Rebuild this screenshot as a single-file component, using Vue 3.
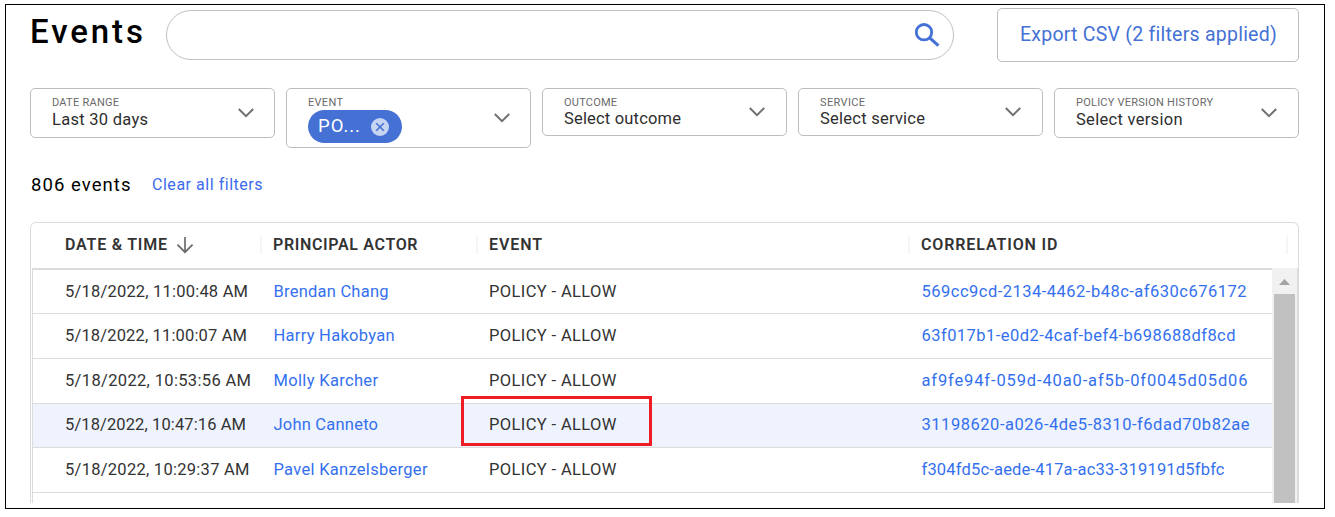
<script setup>
const filters = [
  { label: 'DATE RANGE', lw: 67, value: 'Last 30 days', vw: 96, size: 'mid' },
  { label: 'EVENT', lw: 35, chip: 'PO...', size: 'tall' },
  { label: 'OUTCOME', lw: 53, value: 'Select outcome', vw: 117, size: 'short' },
  { label: 'SERVICE', lw: 45, value: 'Select service', vw: 105, size: 'short' },
  { label: 'POLICY VERSION HISTORY', lw: 137, value: 'Select version', vw: 106.5, size: 'mid' },
]

const columns = [
  { name: 'DATE & TIME', w: 102, sorted: true },
  { name: 'PRINCIPAL ACTOR', w: 144.5 },
  { name: 'EVENT', w: 53 },
  { name: 'CORRELATION ID', w: 136.5 },
]

const rows = [
  { time: '5/18/2022, 11:00:48 AM', tw: 183, actor: 'Brendan Chang', aw: 115, id: '569cc9cd-2134-4462-b48c-af630c676172', iw: 325 },
  { time: '5/18/2022, 11:00:07 AM', tw: 182, actor: 'Harry Hakobyan', aw: 121, id: '63f017b1-e0d2-4caf-bef4-b698688df8cd', iw: 314 },
  { time: '5/18/2022, 10:53:56 AM', tw: 186, actor: 'Molly Karcher', aw: 104.5, id: 'af9fe94f-059d-40a0-af5b-0f0045d05d06', iw: 326 },
  { time: '5/18/2022, 10:47:16 AM', tw: 181, actor: 'John Canneto', aw: 104.5, id: '31198620-a026-4de5-8310-f6dad70b82ae', iw: 328, active: true },
  { time: '5/18/2022, 10:29:37 AM', tw: 184.5, actor: 'Pavel Kanzelsberger', aw: 154, id: 'f304fd5c-aede-417a-ac33-319191d5fbfc', iw: 303 },
]

// Tracks a line of text so that it spans the given width.
const vFit = {
  mounted(el, { value }) {
    el.style.letterSpacing = '0px'
    const natural = el.getBoundingClientRect().width
    const gaps = el.textContent.length - 1
    el.style.letterSpacing = `${((value - natural) / gaps).toFixed(3)}px`
  },
}
</script>

<template>
  <div class="page">
    <div class="frame">
      <header class="top">
        <h1><span v-fit="113">Events</span></h1>
        <div class="search">
          <svg width="26" height="26" viewBox="0 0 26 26" fill="none">
            <circle cx="10" cy="9.2" r="7.7" stroke="#4571d5" stroke-width="2.8" />
            <path d="M15.4 14.6 24.4 22.6" stroke="#4571d5" stroke-width="3.2" />
          </svg>
        </div>
        <button class="export"><span v-fit="256">Export CSV (2 filters applied)</span></button>
      </header>

      <section class="filters">
        <div v-for="f in filters" :key="f.label" class="filter" :class="f.size">
          <div class="field">
            <div class="label"><span v-fit="f.lw">{{ f.label }}</span></div>
            <div v-if="f.chip" class="chip">
              <span v-fit="42">{{ f.chip }}</span>
              <svg width="18" height="18" viewBox="0 0 18 18">
                <circle cx="9" cy="9" r="9" fill="#c7d4f2" />
                <path d="M5.2 5.2 12.8 12.8M12.8 5.2 5.2 12.8" stroke="#4571d5" stroke-width="1.6" />
              </svg>
            </div>
            <div v-else class="value"><span v-fit="f.vw">{{ f.value }}</span></div>
          </div>
          <svg class="chevron" width="16" height="10" viewBox="0 0 16 10" fill="none">
            <path d="M.8 1 8 8.2 15.2 1" stroke="#707070" stroke-width="2" />
          </svg>
        </div>
      </section>

      <div class="summary">
        <span class="count"><span v-fit="99.5">806 events</span></span>
        <a class="clear"><span v-fit="110">Clear all filters</span></a>
      </div>

      <section class="table">
        <div class="head grid">
          <div v-for="c in columns" :key="c.name" class="cell">
            <span v-fit="c.w">{{ c.name }}</span>
            <svg v-if="c.sorted" class="arrow" width="18" height="18" viewBox="0 0 18 18" fill="none">
              <path d="M9 1V16M1.4 8.6 9 16.2 16.6 8.6" stroke="#6b6b6b" stroke-width="1.7" />
            </svg>
          </div>
        </div>
        <div class="body">
          <div class="rows">
            <div v-for="r in rows" :key="r.id" class="row grid" :class="{ active: r.active }">
              <div class="cell"><span v-fit="r.tw">{{ r.time }}</span></div>
              <div class="cell link"><span v-fit="r.aw">{{ r.actor }}</span></div>
              <div class="cell">
                <span v-fit="127.5">POLICY - ALLOW</span>
                <i v-if="r.active" class="marker"></i>
              </div>
              <div class="cell link"><span v-fit="r.iw">{{ r.id }}</span></div>
            </div>
          </div>
          <div class="scrollbar">
            <svg width="11" height="6" viewBox="0 0 11 6"><path d="M0 6 5.5 0 11 6Z" fill="#a3a3a3" /></svg>
            <div class="thumb"></div>
          </div>
        </div>
      </section>
    </div>
  </div>
</template>

<style>
body {
  background: #fff;
  overflow: hidden;
}
</style>

<style scoped>
* {
  box-sizing: border-box;
}
.page {
  height: 517px;
  padding: 4px 10px 0 5px;
  font-family: Roboto, 'Liberation Sans', sans-serif;
  color: #2e2e2e;
}
.page span {
  white-space: nowrap;
}
.frame {
  width: 1320px;
  height: 505px;
  border: 1px solid #000;
  padding: 3px 25px 0 24px;
  display: flex;
  flex-direction: column;
  overflow: hidden;
}
.top {
  display: flex;
  height: 54px;
}
h1 {
  width: 136px;
  margin: 4px 0 0;
  font-size: 33px;
  line-height: 40px;
  font-weight: 500;
  color: #000;
}
.search {
  width: 788px;
  height: 50px;
  margin-top: 2px;
  border: 1px solid #c0c0c0;
  border-radius: 25px;
  display: flex;
  justify-content: flex-end;
  padding: 12px 13px 0 0;
}
.export {
  width: 302px;
  height: 54px;
  margin-left: 43px;
  padding: 0 0 2px 22px;
  text-align: left;
  background: #fff;
  border: 1px solid #bdbdbd;
  border-radius: 5px;
  font: 400 19.5px Roboto, 'Liberation Sans', sans-serif;
  color: #4571d5;
}
.filters {
  display: flex;
  align-items: flex-start;
  gap: 11px;
  height: 60px;
  margin-top: 26px;
}
.filter {
  width: 245px;
  display: flex;
  justify-content: space-between;
  align-items: center;
  border: 1px solid #bdbdbd;
  border-radius: 5px;
  padding: 0 20px 0 21px;
}
.filter.short {
  height: 48px;
  padding-right: 21px;
}
.filter.mid {
  height: 50px;
}
.filter.mid:last-child {
  padding-right: 21px;
}
.filter.tall {
  height: 60px;
}
.field {
  align-self: flex-start;
  padding-top: 8px;
}
.label {
  font-size: 11px;
  line-height: 12px;
  color: #6a6a6a;
}
.value {
  font-size: 16.5px;
  line-height: 20px;
}
.mid .value {
  margin-top: 1px;
}
.chip {
  width: 94px;
  height: 33px;
  margin-top: 1px;
  border-radius: 17px;
  background: #4571d5;
  color: #fff;
  font-size: 18.5px;
  display: flex;
  align-items: center;
  justify-content: space-between;
  padding: 0 13px 0 10px;
}
.chip span {
  position: relative;
  top: -1px;
}
.summary {
  display: flex;
  height: 30px;
  margin-top: 22px;
  line-height: 30px;
}
.count {
  width: 121px;
  padding-left: 1px;
  margin-right: 1px;
  font-size: 18.5px;
  color: #000;
}
.clear {
  font-size: 16px;
  color: #3c6cec;
}
.table {
  flex: none;
  width: 1269px;
  height: 281px;
  margin-top: 22px;
  border: 1px solid #dcdcdc;
  border-bottom: 0;
  border-radius: 6px 6px 0 0;
}
.grid {
  display: grid;
  grid-template-columns: 230px 216px 432px 1fr;
}
.cell {
  position: relative;
  display: flex;
  align-items: center;
}
.head {
  height: 45px;
  font-size: 16px;
  font-weight: 600;
  color: #333;
}
.head .cell {
  height: 19px;
  margin-top: 12px;
  padding-left: 11px;
  border-right: 2px solid #f6f6f6;
}
.head .cell:first-child {
  padding-left: 34px;
}
.head.grid {
  grid-template-columns: 231px 216px 432px 378px;
}
.arrow {
  margin-left: 8px;
}
.body {
  display: flex;
  height: 235px;
  margin-left: 1px;
  border-left: 1px solid #dcdcdc;
  border-right: 2px solid #dcdcdc;
  margin-right: -1px;
}
.rows {
  width: 1239px;
  border-top: 2px solid #dcdcdc;
}
.row {
  height: 45px;
  border-bottom: 1px solid #dcdcdc;
  font-size: 16.5px;
  color: #333;
}
.row:nth-child(3n + 1) {
  height: 44px;
}
.row .cell {
  padding: 0 0 2px 10px;
}
.row:first-child .cell {
  padding-bottom: 0;
}
.row .cell:first-child {
  padding-left: 32px;
}
.row .cell.link {
  padding-left: 10.5px;
}
.link {
  color: #3470ee;
}
.active {
  background: #eff3fd;
}
.marker {
  position: absolute;
  left: -18px;
  top: -8px;
  width: 191px;
  height: 50px;
  border: 3px solid #ee1c25;
}
.scrollbar {
  width: 25px;
  display: flex;
  flex-direction: column;
  align-items: center;
  background: #f1f1f1;
  padding-top: 11px;
}
.thumb {
  width: 21px;
  flex: 1;
  margin-top: 9px;
  background: #c1c1c1;
}
</style>
